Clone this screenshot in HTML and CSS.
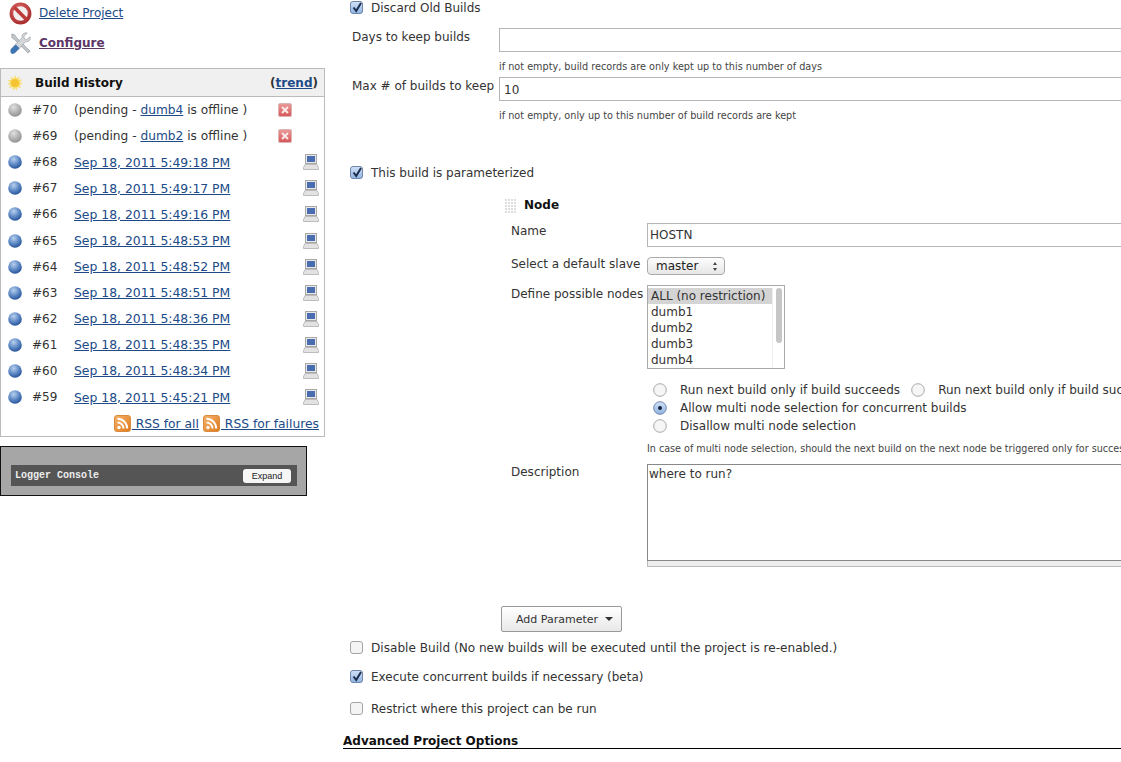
FILE: index.html
```html
<!DOCTYPE html>
<html lang="en">
<head>
    <meta charset="UTF-8">
    <title>Configure Project</title>
    <link rel="stylesheet" href="styles.css">
</head>
<body>
    <svg class="defs" width="0" height="0">
        <defs>
            <radialGradient id="ball-grey" cx="40%" cy="30%" r="75%">
                <stop offset="0" stop-color="#e0e0e0"/>
                <stop offset="1" stop-color="#8c8c8c"/>
            </radialGradient>
            <radialGradient id="ball-blue" cx="40%" cy="30%" r="75%">
                <stop offset="0" stop-color="#b7d0ee"/>
                <stop offset=".55" stop-color="#5c87c4"/>
                <stop offset="1" stop-color="#1f4c94"/>
            </radialGradient>
            <radialGradient id="stop-red" cx="40%" cy="30%" r="80%">
                <stop offset="0" stop-color="#e06a6a"/>
                <stop offset="1" stop-color="#a92c2c"/>
            </radialGradient>
            <linearGradient id="check-fill" x1="0" y1="0" x2="0" y2="1">
                <stop offset="0" stop-color="#d3e2f6"/>
                <stop offset="1" stop-color="#8fb4e3"/>
            </linearGradient>
            <linearGradient id="rss-fill" x1="0" y1="0" x2="1" y2="1">
                <stop offset="0" stop-color="#f6b26a"/>
                <stop offset="1" stop-color="#dd7a1e"/>
            </linearGradient>
            <linearGradient id="cancel-fill" x1="0" y1="0" x2="0" y2="1">
                <stop offset="0" stop-color="#eb9a9a"/>
                <stop offset="1" stop-color="#d55656"/>
            </linearGradient>
            <symbol id="i-ball-grey" viewBox="0 0 16 16"><circle cx="8" cy="8" r="6.8" fill="url(#ball-grey)"/></symbol>
            <symbol id="i-ball-blue" viewBox="0 0 16 16"><circle cx="8" cy="8" r="6.8" fill="url(#ball-blue)"/></symbol>
            <symbol id="i-cancel" viewBox="0 0 14 14">
                <rect x=".5" y=".5" width="13" height="13" rx="1.5" fill="url(#cancel-fill)" stroke="#dcb4b4"/>
                <path d="M4 4l6 6M10 4l-6 6" stroke="#fbeaea" stroke-width="2"/>
            </symbol>
            <symbol id="i-computer" viewBox="0 0 16 16">
                <rect x="2.5" y=".5" width="11" height="9" fill="#e8e8e8" stroke="#a8a8a8"/>
                <rect x="4" y="2" width="8" height="6" fill="#4a6cb0"/>
                <path d="M2 10.5h12l1.500 3v2H.5v-2z" fill="#e2e2e2" stroke="#bcbcbc"/>
            </symbol>
            <symbol id="i-rss" viewBox="0 0 17 17">
                <rect x=".5" y=".5" width="16" height="16" rx="2.500" fill="url(#rss-fill)" stroke="#d98a3a"/>
                <circle cx="5" cy="12.500" r="1.700" fill="#fff"/>
                <path d="M3.500 7.500a6 6 0 0 1 6 6M3.500 3.800a9.700 9.700 0 0 1 9.700 9.700" fill="none" stroke="#fff" stroke-width="2"/>
            </symbol>
            <symbol id="i-checked" viewBox="0 0 14 14">
                <rect x=".5" y=".5" width="12" height="12" rx="2.500" fill="url(#check-fill)" stroke="#6f86a8"/>
                <path d="M3.500 6.500l2.700 3.500L11 2" fill="none" stroke="#1d2f4d" stroke-width="2"/>
            </symbol>
            <symbol id="i-unchecked" viewBox="0 0 14 14">
                <rect x=".5" y=".5" width="12" height="12" rx="2.500" fill="#f4f4f4" stroke="#a4a4a4"/>
            </symbol>
            <symbol id="i-radio" viewBox="0 0 14 14">
                <circle cx="7" cy="7" r="6.300" fill="#f6f6f6" stroke="#a8a8a8"/>
            </symbol>
            <symbol id="i-radio-on" viewBox="0 0 14 14">
                <circle cx="7" cy="7" r="6.300" fill="url(#check-fill)" stroke="#6f86a8"/>
                <circle cx="7" cy="7" r="2" fill="#14233c"/>
            </symbol>
        </defs>
    </svg>

    <div class="page">
        <aside class="sidebar">
            <div class="task">
                <svg class="task-icon" viewBox="0 0 24 24">
                    <circle cx="12" cy="12" r="9.500" fill="#f4eeee" stroke="url(#stop-red)" stroke-width="3.800"/>
                    <path d="M5.500 5.500l13 13" stroke="#bd3a3a" stroke-width="3.800"/>
                </svg>
                <a href="#">Delete Project</a>
            </div>
            <div class="task">
                <svg class="task-icon" viewBox="0 0 24 24">
                    <path d="M3 2l3 1 2 3 14 14-2 2L6 8 3 6z" fill="#c4c8cc" stroke="#8f9499" stroke-width=".7"/>
                    <path d="M22 5l-3.500 3-2.500-1-.5-2.500L19 1c-3-.6-6 1.500-5.500 5L2 18l4 4L17.500 10c3 .8 5.500-2 4.500-5z" fill="#d5d8da" stroke="#9a9ea2" stroke-width=".7"/>
                    <path d="M2 18l5-5 4 4-5 5c-1 1-2.500 1-3.500.5S1 19 2 18z" fill="#3f74b5"/>
                </svg>
                <a href="#" class="visited">Configure</a>
            </div>

            <section class="history">
                <div class="history-head">
                    <svg class="sun" viewBox="0 0 18 18">
                        <path d="M9 0l1.600 3.500L14 1.700l-.6 3.700 3.800-.2-2.400 3 2.900 1.800-3.500 1.200 1.500 3.500-3.700-.8L11 17.500 9 15l-2 2.500-1-3.600-3.700.8 1.500-3.500L.3 10.500l2.900-2-2.400-3 3.800.2-.6-3.700 3.400 1.800z" fill="#f7df78"/>
                        <circle cx="9" cy="9" r="4.600" fill="#f5c531"/>
                    </svg>
                    <span class="history-title">Build History</span>
                    <span class="trend">(<a href="#">trend</a>)</span>
                </div>
                <div class="build">
                    <svg class="ball"><use href="#i-ball-grey"/></svg>
                    <span class="build-no">#70</span>
                    <span class="build-text">(pending - <a href="#">dumb4</a> is offline )</span>
                    <svg class="cancel"><use href="#i-cancel"/></svg>
                </div>
                <div class="build">
                    <svg class="ball"><use href="#i-ball-grey"/></svg>
                    <span class="build-no">#69</span>
                    <span class="build-text">(pending - <a href="#">dumb2</a> is offline )</span>
                    <svg class="cancel"><use href="#i-cancel"/></svg>
                </div>
                <div class="build">
                    <svg class="ball"><use href="#i-ball-blue"/></svg>
                    <span class="build-no">#68</span>
                    <span class="build-text"><a href="#" class="build-date">Sep 18, 2011 5:49:18 PM</a></span>
                    <svg class="computer"><use href="#i-computer"/></svg>
                </div>
                <div class="build">
                    <svg class="ball"><use href="#i-ball-blue"/></svg>
                    <span class="build-no">#67</span>
                    <span class="build-text"><a href="#" class="build-date">Sep 18, 2011 5:49:17 PM</a></span>
                    <svg class="computer"><use href="#i-computer"/></svg>
                </div>
                <div class="build">
                    <svg class="ball"><use href="#i-ball-blue"/></svg>
                    <span class="build-no">#66</span>
                    <span class="build-text"><a href="#" class="build-date">Sep 18, 2011 5:49:16 PM</a></span>
                    <svg class="computer"><use href="#i-computer"/></svg>
                </div>
                <div class="build">
                    <svg class="ball"><use href="#i-ball-blue"/></svg>
                    <span class="build-no">#65</span>
                    <span class="build-text"><a href="#" class="build-date">Sep 18, 2011 5:48:53 PM</a></span>
                    <svg class="computer"><use href="#i-computer"/></svg>
                </div>
                <div class="build">
                    <svg class="ball"><use href="#i-ball-blue"/></svg>
                    <span class="build-no">#64</span>
                    <span class="build-text"><a href="#" class="build-date">Sep 18, 2011 5:48:52 PM</a></span>
                    <svg class="computer"><use href="#i-computer"/></svg>
                </div>
                <div class="build">
                    <svg class="ball"><use href="#i-ball-blue"/></svg>
                    <span class="build-no">#63</span>
                    <span class="build-text"><a href="#" class="build-date">Sep 18, 2011 5:48:51 PM</a></span>
                    <svg class="computer"><use href="#i-computer"/></svg>
                </div>
                <div class="build">
                    <svg class="ball"><use href="#i-ball-blue"/></svg>
                    <span class="build-no">#62</span>
                    <span class="build-text"><a href="#" class="build-date">Sep 18, 2011 5:48:36 PM</a></span>
                    <svg class="computer"><use href="#i-computer"/></svg>
                </div>
                <div class="build">
                    <svg class="ball"><use href="#i-ball-blue"/></svg>
                    <span class="build-no">#61</span>
                    <span class="build-text"><a href="#" class="build-date">Sep 18, 2011 5:48:35 PM</a></span>
                    <svg class="computer"><use href="#i-computer"/></svg>
                </div>
                <div class="build">
                    <svg class="ball"><use href="#i-ball-blue"/></svg>
                    <span class="build-no">#60</span>
                    <span class="build-text"><a href="#" class="build-date">Sep 18, 2011 5:48:34 PM</a></span>
                    <svg class="computer"><use href="#i-computer"/></svg>
                </div>
                <div class="build">
                    <svg class="ball"><use href="#i-ball-blue"/></svg>
                    <span class="build-no">#59</span>
                    <span class="build-text"><a href="#" class="build-date">Sep 18, 2011 5:45:21 PM</a></span>
                    <svg class="computer"><use href="#i-computer"/></svg>
                </div>
                <div class="history-foot">
                    <a href="#"><svg class="rss"><use href="#i-rss"/></svg>&nbsp;RSS for all</a>
                    <a href="#"><svg class="rss"><use href="#i-rss"/></svg>&nbsp;RSS for failures</a>
                </div>
            </section>

            <div class="logger">
                <div class="logger-bar">
                    <span class="logger-title">Logger Console</span>
                    <span class="logger-btn">Expand</span>
                </div>
            </div>
        </aside>

        <main class="form">
            <div class="check check-discard"><svg class="box"><use href="#i-checked"/></svg>Discard Old Builds</div>

            <div class="field field-days">
                <label>Days to keep builds</label>
                <input class="text" type="text">
            </div>
            <p class="help help-days">if not empty, build records are only kept up to this number of days</p>
            <div class="field field-max">
                <label>Max # of builds to keep</label>
                <input class="text" type="text" value="10">
            </div>
            <p class="help help-max">if not empty, only up to this number of build records are kept</p>

            <div class="check check-param"><svg class="box"><use href="#i-checked"/></svg>This build is parameterized</div>

            <div class="param">
                <div class="param-head">
                    <span class="grip"></span>
                    <strong>Node</strong>
                </div>
                <div class="pfield pfield-name">
                    <label>Name</label>
                    <input class="text text-name" type="text" value="HOSTN">
                </div>
                <div class="pfield pfield-slave">
                    <label>Select a default slave</label>
                    <span class="select">master
                        <svg class="select-arrows" viewBox="0 0 6 9"><path d="M3 0l2 3H1zM3 9L1 6h4z" fill="#444"/></svg>
                    </span>
                </div>
                <div class="pfield pfield-nodes">
                    <label>Define possible nodes</label>
                    <div class="listbox">
                        <div class="list-items">
                            <div class="list-item selected">ALL (no restriction)</div>
                            <div class="list-item">dumb1</div>
                            <div class="list-item">dumb2</div>
                            <div class="list-item">dumb3</div>
                            <div class="list-item">dumb4</div>
                        </div>
                        <div class="list-track"><span class="list-thumb"></span></div>
                    </div>
                </div>
                <div class="radios">
                    <div class="radio-row">
                        <svg class="radio"><use href="#i-radio"/></svg><span class="radio-first">Run next build only if build succeeds</span>
                        <svg class="radio"><use href="#i-radio"/></svg><span>Run next build only if build succeeds or is unstable</span>
                    </div>
                    <div class="radio-row"><svg class="radio"><use href="#i-radio-on"/></svg><span>Allow multi node selection for concurrent builds</span></div>
                    <div class="radio-row"><svg class="radio"><use href="#i-radio"/></svg><span>Disallow multi node selection</span></div>
                </div>
                <p class="help help-multi">In case of multi node selection, should the next build on the next node be triggered only for successful builds</p>
                <div class="pfield pfield-desc">
                    <label>Description</label>
                    <div class="desc">
                        <textarea class="textarea">where to run?</textarea>
                        <div class="desc-handle"></div>
                    </div>
                </div>
            </div>

            <button class="add-btn" type="button">Add Parameter<span class="caret"></span></button>

            <div class="check check-disable"><svg class="box"><use href="#i-unchecked"/></svg>Disable Build (No new builds will be executed until the project is re-enabled.)</div>
            <div class="check check-exec"><svg class="box"><use href="#i-checked"/></svg>Execute concurrent builds if necessary (beta)</div>
            <div class="check check-restrict"><svg class="box"><use href="#i-unchecked"/></svg>Restrict where this project can be run</div>

            <h3 class="section-title">Advanced Project Options</h3>
        </main>
    </div>
</body>
</html>
```

FILE: styles.css
```css
html, body {
	margin: 0;
	padding: 0;
	height: 762px;
	overflow: hidden;
	background-color: #fff;
}

body {
	font-family: "DejaVu Sans", Verdana, sans-serif;
	font-size: 12px;
	color: #333;
}

a {
	color: #204a87;
}

a.visited {
	color: #5c3566;
	font-weight: bold;
}

.defs {
	position: absolute;
}

.page {
	display: flex;
	width: 1121px;
	height: 762px;
	overflow: hidden;
}

/* left column */
.sidebar {
	flex: 0 0 325px;
	width: 325px;
}

.task {
	display: flex;
	align-items: center;
	height: 30px;
	padding-left: 9px;
}

.task:first-child {
	margin-top: -2px;
}

.task-icon {
	width: 23px;
	height: 23px;
	margin-right: 7px;
}

.history {
	margin-top: 10px;
	border: 1px solid #bbb;
	height: 369px;
	box-sizing: border-box;
	width: 325px;
}

.history-head {
	display: flex;
	align-items: center;
	height: 27px;
	padding: 0 6px;
	background-color: #f0f0f0;
	border-bottom: 1px solid #bbb;
	font-weight: bold;
}

.sun {
	width: 16px;
	height: 16px;
	margin-right: 12px;
}

.history-title {
	flex: 1;
	color: #111;
}

.trend a {
	font-weight: bold;
}

.build {
	display: flex;
	align-items: center;
	height: 26.1px;
}

.ball {
	width: 16px;
	height: 16px;
	margin-left: 6px;
	margin-right: 9px;
}

.build-no {
	width: 42px;
}

.build-text {
	flex: 1;
	font-size: 12.2px;
}

.build-date {
	font-size: 12.4px;
}

.cancel {
	width: 14px;
	height: 14px;
	margin-right: 32px;
}

.computer {
	width: 16px;
	height: 16px;
	margin-right: 5px;
}

.history-foot {
	display: flex;
	justify-content: flex-end;
	gap: 4px;
	padding: 5px 5px 0 0;
	font-size: 12.3px;
}

.rss {
	width: 17px;
	height: 17px;
	margin-right: 1px;
	vertical-align: -4px;
}

.logger {
	margin-top: 9px;
	width: 307px;
	height: 50px;
	box-sizing: border-box;
	border: 1px solid #111;
	background-color: #a6a6a6;
	padding: 18px 9px 0 10px;
}

.logger-bar {
	display: flex;
	justify-content: space-between;
	align-items: center;
	height: 21px;
	background-color: #555;
	padding: 0 6px 0 4px;
}

.logger-title {
	font-family: "Liberation Mono", monospace;
	font-size: 10px;
	font-weight: bold;
	color: #eee;
}

.logger-btn {
	width: 48px;
	height: 14px;
	line-height: 14px;
	border-radius: 3px;
	background-color: #f6f6f6;
	text-align: center;
	font-family: "Liberation Sans", sans-serif;
	font-size: 9px;
	color: #222;
}

/* form column */
.form {
	flex: 1;
	padding-left: 18px;
	min-width: 0;
}

.check {
	display: flex;
	align-items: center;
	height: 16px;
	margin-left: 7px;
	white-space: nowrap;
}

.box {
	width: 14px;
	height: 14px;
	margin-right: 7px;
}

.check-discard {
	margin-top: 0;
}

.check-disable {
	font-size: 12.1px;
}

.field {
	display: flex;
	margin-left: 9px;
	width: 800px;
}

.field label {
	flex: 0 0 147px;
	padding-top: 2px;
	white-space: nowrap;
}

.field-days {
	margin-top: 12px;
}

.text {
	width: 700px;
	height: 24px;
	box-sizing: border-box;
	margin: 0;
	padding: 2px 4px 1px;
	border: 1px solid #b5b5b5;
	border-radius: 0;
	font-family: "DejaVu Sans", Verdana, sans-serif;
	font-size: 12px;
	color: #333;
}

.text-name {
	padding: 1px 2px;
}

.help {
	margin: 0;
	font-size: 9.7px;
	color: #444;
	white-space: nowrap;
}

.help-days {
	margin: 9px 0 0 156px;
	height: 16px;
}

.help-max {
	margin: 9px 0 0 156px;
}

.check-param {
	margin-top: 44px;
}

.param {
	margin-left: 161px;
	width: 800px;
}

.param-head {
	display: flex;
	align-items: center;
	margin-top: 16px;
	height: 16px;
}

.grip {
	width: 13px;
	height: 15px;
	margin-right: 7px;
	background-color: #dedede;
	background-image: linear-gradient(#fff 1px, transparent 1px), linear-gradient(90deg, #fff 1px, transparent 1px);
	background-size: 3px 3px;
}

.param-head strong {
	color: #111;
}

.pfield {
	display: flex;
	margin-left: 7px;
}

.pfield label {
	flex: 0 0 136px;
	padding-top: 1px;
	white-space: nowrap;
}

.pfield-name {
	margin-top: 10px;
}

.pfield-slave {
	margin-top: 10px;
	height: 18px;
}

.pfield-slave label {
	padding-top: 0;
}

.pfield-nodes {
	margin-top: 10px;
}

.pfield-nodes label {
	padding-top: 2px;
}

.select {
	display: inline-flex;
	align-items: center;
	justify-content: space-between;
	width: 78px;
	height: 18px;
	box-sizing: border-box;
	padding: 0 6px 0 8px;
	border: 1px solid #aaa;
	border-radius: 4px;
	background: linear-gradient(#fdfdfd, #e6e6e6);
	color: #222;
}

.select-arrows {
	width: 6px;
	height: 9px;
}

.listbox {
	display: flex;
	width: 138px;
	height: 84px;
	box-sizing: border-box;
	border: 1px solid #aaa;
	padding-top: 2px;
}

.list-items {
	flex: 1;
	overflow: hidden;
}

.list-item {
	height: 16px;
	line-height: 16px;
	padding-left: 3px;
	white-space: nowrap;
}

.list-item.selected {
	background-color: #d4d4d4;
}

.list-track {
	flex: 0 0 11px;
	border-left: 1px solid #eee;
}

.list-thumb {
	display: block;
	width: 6px;
	height: 55px;
	margin-left: 3px;
	border-radius: 3px;
	background-color: #c6c6c6;
}

.radios {
	margin: 12px 0 0 149px;
}

.radio-row {
	display: flex;
	align-items: center;
	height: 18px;
	white-space: nowrap;
}

.radio {
	flex: 0 0 14px;
	width: 14px;
	height: 14px;
	margin-right: 13px;
}

.radio-first {
	margin-right: 11px;
}

.help-multi {
	margin: 8px 0 0 143px;
	font-size: 9.6px;
}

.pfield-desc {
	margin-top: 10px;
}

.desc {
	width: 600px;
}

.textarea {
	display: block;
	width: 600px;
	height: 97px;
	box-sizing: border-box;
	margin: 0;
	padding: 2px 1px;
	border: 1px solid #888;
	border-radius: 0;
	resize: none;
	font-family: "DejaVu Sans", Verdana, sans-serif;
	font-size: 12px;
	color: #333;
}

.desc-handle {
	height: 6px;
	background-color: #eee;
	border: 1px solid #bbb;
	border-top: 0;
	box-sizing: border-box;
}

.add-btn {
	display: block;
	margin: 39px 0 0 158px;
	width: 121px;
	height: 26px;
	padding: 0 0 0 14px;
	text-align: left;
	border: 1px solid #999;
	border-radius: 2px;
	background: linear-gradient(#fff, #e8e8e8);
	font-family: "DejaVu Sans", Verdana, sans-serif;
	font-size: 11px;
	color: #333;
}

.caret {
	display: inline-block;
	margin-left: 7px;
	vertical-align: 2px;
	border: 4px solid transparent;
	border-top-color: #333;
	border-bottom: 0;
}

.check-disable {
	margin-top: 8px;
}

.check-exec {
	margin-top: 13px;
}

.check-restrict {
	margin-top: 16px;
}

.section-title {
	margin: 18px 0 0;
	padding-bottom: 0;
	border-bottom: 1px solid #000;
	font-size: 12px;
	line-height: 13px;
	color: #111;
}
```
